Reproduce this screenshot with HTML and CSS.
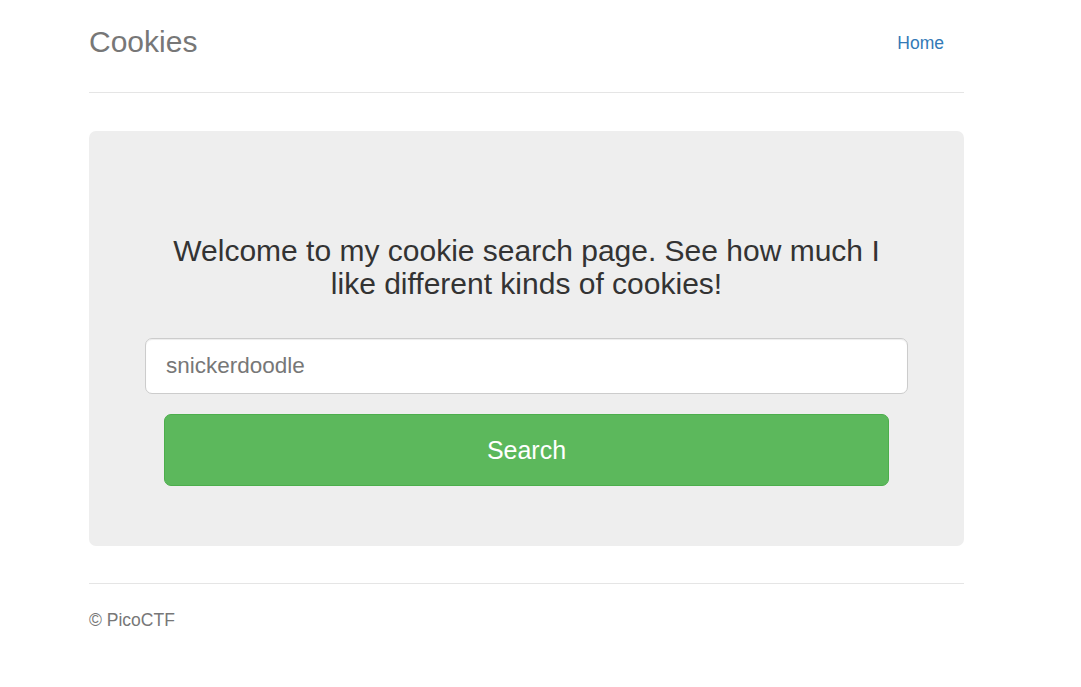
FILE: index.html
```html
<!DOCTYPE html>
<html>
<head>
<meta charset="utf-8">
<title>Cookies</title>
<link rel="stylesheet" href="styles.css">
</head>
<body>
<div class="container">
  <div class="header">
    <h3 class="brand">Cookies</h3>
    <nav class="nav"><a href="#" class="nav-link">Home</a></nav>
  </div>
  <div class="jumbotron">
    <h3 class="lead">Welcome to my cookie search page. See how much I like different kinds of cookies!</h3>
    <form class="search-form">
      <input class="search-input" type="text" name="name" placeholder="snickerdoodle">
      <button class="search-btn" type="button">Search</button>
    </form>
  </div>
  <footer class="footer">
    <p class="copy">© PicoCTF</p>
  </footer>
</div>
</body>
</html>
```
FILE: styles.css
```css
* { box-sizing: border-box; }
html, body { margin: 0; padding: 0; background: #fff; }
body {
  font-family: "Liberation Sans", Arial, Helvetica, sans-serif;
  font-size: 17.5px;
  color: #333;
}
.container {
  width: 875px;
  margin-left: 89px;
}
.header {
  display: flex;
  justify-content: space-between;
  align-items: center;
  padding-top: 17px;
  padding-bottom: 25px;
  border-bottom: 1px solid #e5e5e5;
}
.brand {
  margin: 0;
  font-size: 30px;
  font-weight: normal;
  line-height: 50px;
  color: #777;
}
.nav-link {
  display: block;
  padding: 2px 20px 0 19px;
  line-height: 48px;
  font-size: 17.5px;
  color: #337ab7;
  text-decoration: none;
}
.jumbotron {
  margin-top: 38px;
  background: #eee;
  border-radius: 7px;
  padding: 103px 0 60px;
  text-align: center;
}
.lead {
  margin: 0 auto 38px;
  width: 731px;
  font-size: 30px;
  font-weight: normal;
  line-height: 33px;
  color: #333;
}
.search-form {
  display: flex;
  flex-direction: column;
  gap: 20px;
  margin: 0;
}
.search-input {
  margin: 0 56px;
  height: 56px;
  border: 1px solid #ccc;
  border-radius: 7px;
  padding: 0 20px;
  font-family: "Liberation Sans", Arial, sans-serif;
  font-size: 22.5px;
  color: #555;
  background: #fff;
  box-shadow: inset 0 1px 1px rgba(0,0,0,.075);
}
.search-input::placeholder { color: #777; opacity: 1; }
.search-btn {
  margin: 0 75px;
  height: 72px;
  border: 1px solid #4cae4c;
  border-radius: 7px;
  background: #5cb85c;
  color: #fff;
  font-family: "Liberation Sans", Arial, sans-serif;
  font-size: 25px;
  cursor: pointer;
}
.footer {
  margin-top: 37px;
  border-top: 1px solid #e5e5e5;
  padding-top: 24px;
}
.copy {
  margin: 0;
  line-height: 25px;
  font-size: 17.5px;
  color: #777;
}
```
